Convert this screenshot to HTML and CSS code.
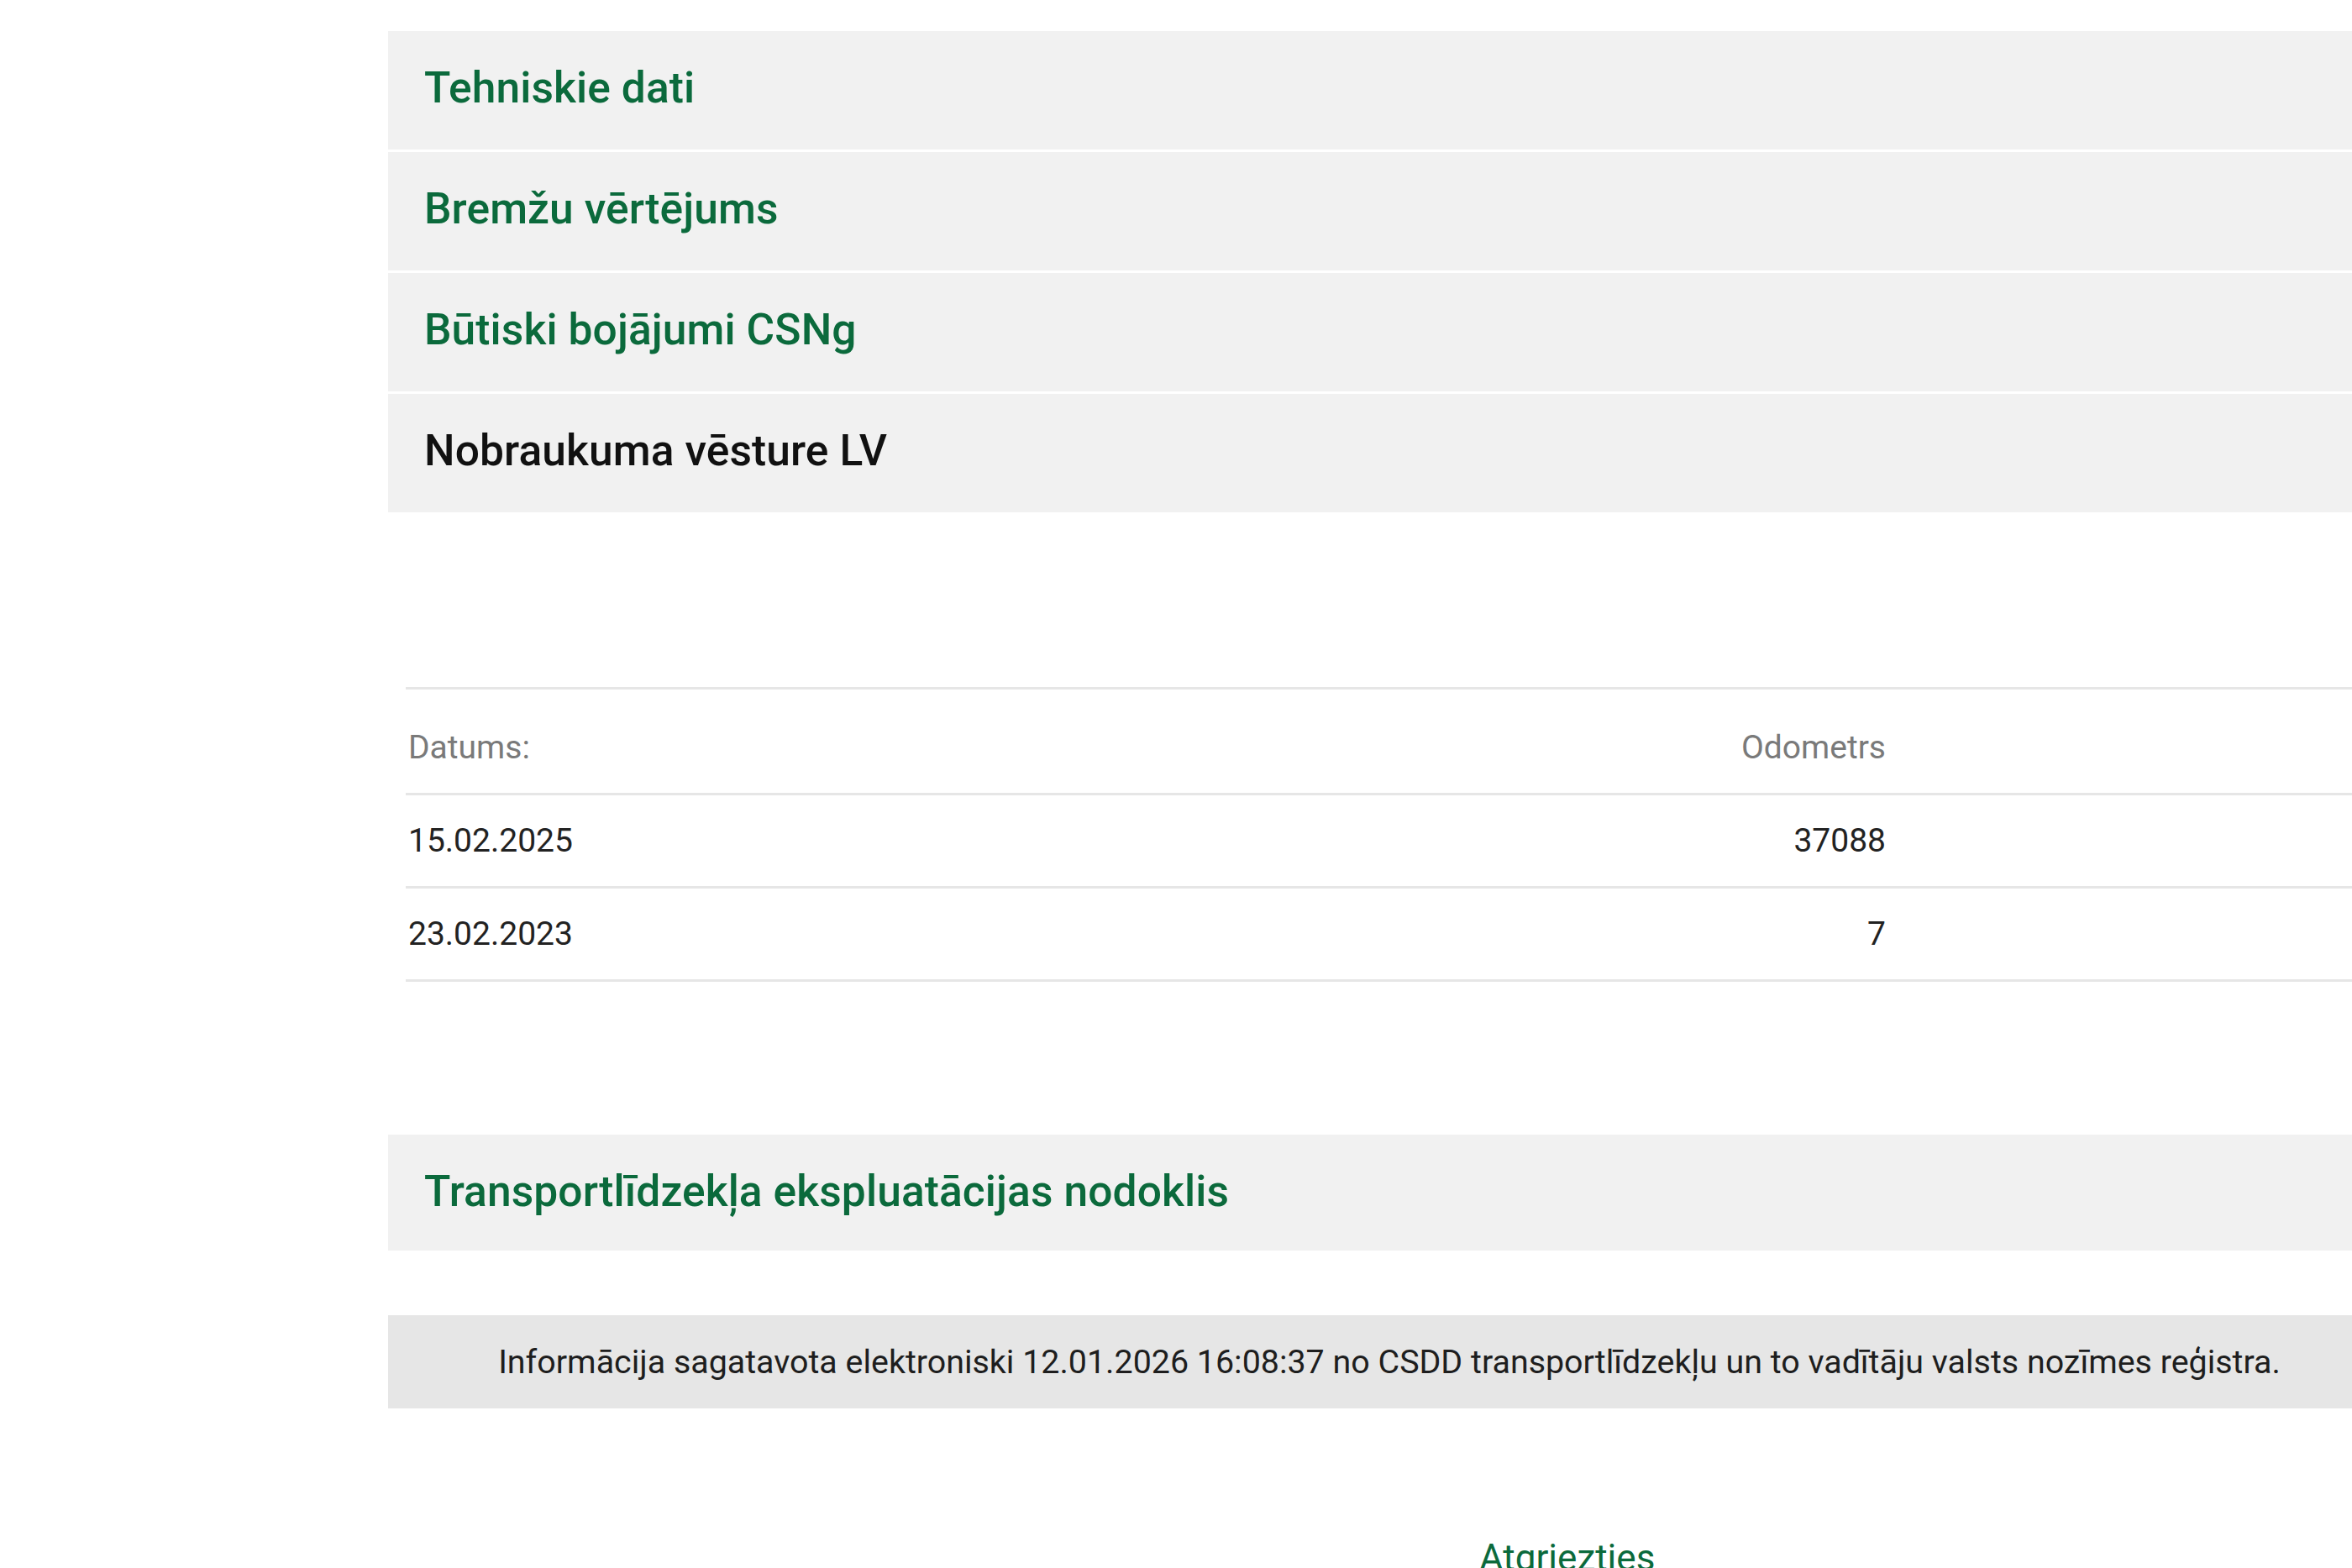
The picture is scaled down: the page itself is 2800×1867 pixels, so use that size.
FILE: index.html
```html
<!DOCTYPE html>
<html lang="lv">
<head>
<meta charset="utf-8">
<title>Transportlīdzekļa informācija</title>
<link rel="stylesheet" href="styles.css">
</head>
<body>
<div class="page">
  <div class="accordion">
    <div class="acc-item"><span class="acc-title">Tehniskie dati</span></div>
    <div class="acc-item"><span class="acc-title">Bremžu vērtējums</span></div>
    <div class="acc-item"><span class="acc-title">Būtiski bojājumi CSNg</span></div>
    <div class="acc-item active"><span class="acc-title">Nobraukuma vēsture LV</span></div>
  </div>

  <div class="history">
    <div class="grid-table">
      <div class="cell head">Datums:</div>
      <div class="cell head num">Odometrs</div>
      <div class="cell head"></div>

      <div class="cell">15.02.2025</div>
      <div class="cell num">37088</div>
      <div class="cell"></div>

      <div class="cell">23.02.2023</div>
      <div class="cell num">7</div>
      <div class="cell"></div>
    </div>
  </div>

  <div class="acc-item single"><span class="acc-title">Transportlīdzekļa ekspluatācijas nodoklis</span></div>

  <div class="info">Informācija sagatavota elektroniski 12.01.2026 16:08:37 no CSDD transportlīdzekļu un to vadītāju valsts nozīmes reģistra.</div>

  <div class="actions"><a class="back" href="#">Atgriezties</a></div>
</div>
</body>
</html>
```
FILE: styles.css
```css
html, body {
  margin: 0;
  padding: 0;
  background: #ffffff;
  overflow: hidden;
}
body {
  font-family: Roboto, "Liberation Sans", Arial, sans-serif;
  color: #222222;
}
.page {
  margin-left: 462px;
  width: 2384px;
  padding-top: 37px;
}
.accordion {
  display: flex;
  flex-direction: column;
  gap: 3px;
}
.acc-item {
  background: #f1f1f1;
  height: 141px;
  display: flex;
  align-items: center;
  padding-left: 43px;
  padding-bottom: 7px;
  box-sizing: border-box;
}
.acc-title {
  font-size: 51.5px;
  font-weight: 500;
  color: #0b6a3c;
  letter-spacing: 0.1px;
}
.acc-item.active .acc-title {
  color: #111111;
}
.history {
  padding: 208px 21px 0 21px;
}
.grid-table {
  display: grid;
  grid-template-columns: 1000px 762px 1fr;
  border-top: 3px solid #e6e6e6;
}
.cell {
  height: 108px;
  border-bottom: 3px solid #e6e6e6;
  display: flex;
  align-items: center;
  padding-left: 3px;
  font-size: 39px;
  color: #222222;
}
.cell.head {
  height: 126px;
  padding-top: 14px;
  box-sizing: border-box;
  color: #7a7a7a;
}
.cell.num {
  justify-content: flex-end;
  padding-left: 0;
}
.acc-item.single {
  margin-top: 182px;
  height: 138px;
  padding-bottom: 4px;
}
.info {
  margin-top: 77px;
  height: 111px;
  background: #e6e6e6;
  display: flex;
  align-items: center;
  justify-content: center;
  font-size: 39.4px;
  color: #1e1e1e;
}
.actions {
  padding-top: 152px;
  padding-left: 1299px;
}
.back {
  font-size: 44px;
  color: #0b6a3c;
  text-decoration: none;
}
```
